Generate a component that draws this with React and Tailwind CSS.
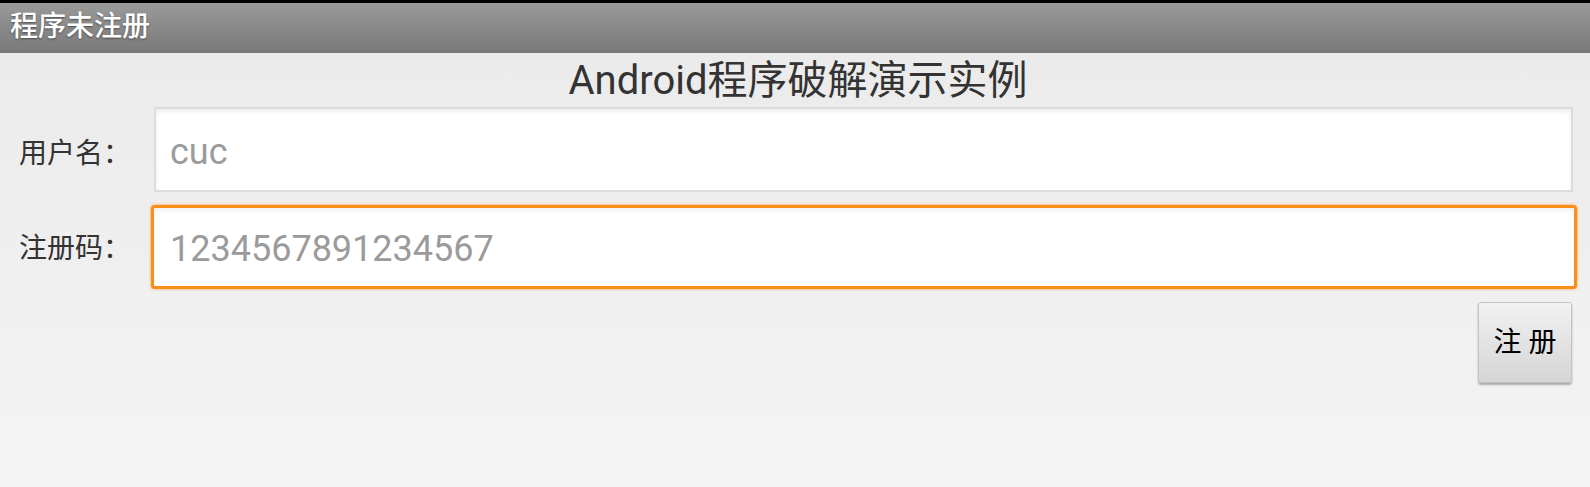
export default function App() {
  return (
    <div
      className="w-[1590px] h-[487px] flex flex-col overflow-hidden"
      style={{ fontFamily: 'Roboto, "Noto Sans CJK SC", sans-serif' }}
    >
      <div className="h-[3px] bg-black" />
      <div className="h-[50px] flex items-center px-[10px] bg-gradient-to-b from-[#9a9a9a] to-[#797979]">
        <span className="text-[28px] leading-none font-medium text-white pb-[3px] [text-shadow:0_1px_2px_rgba(0,0,0,0.45)]">
          程序未注册
        </span>
      </div>

      <div className="flex-1 flex flex-col bg-gradient-to-b from-[#ebebeb] to-[#f4f4f4]">
        <div className="h-[54px] flex items-center justify-center pl-[6px]">
          <span className="text-[40px] leading-none text-[#333333] pt-[2px]">Android程序破解演示实例</span>
        </div>

        <div className="flex items-center pl-[19px] pr-[17px]">
          <span className="w-[135px] text-[28px] leading-none text-[#333333] pt-[8px]">用户名：</span>
          <div className="flex-1 h-[85px] flex items-center pl-[14px] pt-[5px] bg-white border-2 border-[#dcdcdc] shadow-[inset_0_3px_4px_rgba(0,0,0,0.07)]">
            <span className="text-[36px] leading-none text-[#9b9b9b]">cuc</span>
          </div>
        </div>

        <div className="flex items-center pl-[19px] pr-[13px] mt-[13px]">
          <span className="w-[132px] text-[28px] leading-none text-[#333333] pt-[3px]">注册码：</span>
          <div className="flex-1 h-[84px] flex items-center pl-[16px] pt-[4px] bg-white rounded-[4px] border-[3px] border-[#f98e1a] shadow-[0_0_3px_rgba(255,150,40,0.9),inset_0_3px_4px_rgba(0,0,0,0.06)]">
            <span className="text-[36px] leading-none text-[#9b9b9b]">1234567891234567</span>
          </div>
        </div>

        <div className="flex justify-end pr-[18px] mt-[13px]">
          <button className="w-[94px] h-[81px] flex items-center justify-center rounded-[3px] border border-[#c4c4c4] bg-gradient-to-b from-[#f2f2f2] to-[#d5d5d5] shadow-[0_2px_2px_rgba(0,0,0,0.3)]">
            <span className="text-[28px] leading-none text-black">注 册</span>
          </button>
        </div>
      </div>
    </div>
  );
}
